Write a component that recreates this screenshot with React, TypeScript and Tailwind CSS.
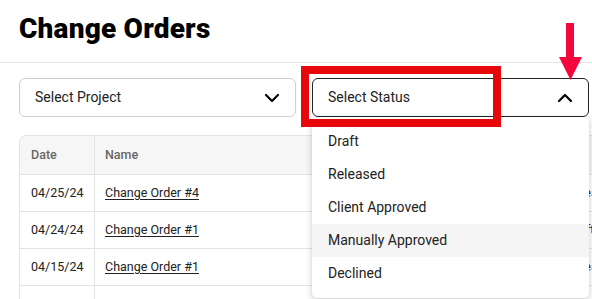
import { ChevronDown, ChevronUp } from "lucide-react";

const ROWS = [
  { date: "04/25/24", name: "Change Order #4", status: "Release" },
  { date: "04/24/24", name: "Change Order #1", status: "Draft" },
  { date: "04/15/24", name: "Change Order #1", status: "Release" },
  { date: "", name: "", status: "" },
];

const STATUSES = ["Draft", "Released", "Client Approved", "Manually Approved", "Declined"];

export default function App() {
  return (
    <div
      className="relative w-[592px] h-[299px] overflow-hidden bg-white text-[#222]"
      style={{ fontFamily: "Roboto, 'Noto Sans', sans-serif" }}
    >
      {/* Title */}
      <div className="px-[19px] pt-[13px] pb-[17px]">
        <h1 className="text-[28px] leading-[32px] font-black text-black tracking-[0.2px]">Change Orders</h1>
      </div>
      <div className="border-t border-[#e6e6e6]" />

      {/* Filters */}
      <div className="relative flex gap-4 pl-[19px] pt-[15px] w-[605px]">
        <div className="flex-none w-[277px] h-[39px] flex items-center justify-between pl-[15px] pr-[11px] border border-[#cfcfcf] rounded-[6px] text-[14px]">
          <span>Select Project</span>
          <ChevronDown size={24} strokeWidth={2.2} className="text-black" />
        </div>
        <div className="relative flex-none w-[277px] h-[39px] flex items-center justify-between pl-[15px] pr-[11px] border border-[#222] rounded-[6px] text-[14px]">
          <span>Select Status</span>
          <ChevronUp size={24} strokeWidth={2.2} className="text-black" />

          {/* Dropdown menu */}
          <div className="absolute left-[-1px] top-[38px] w-[277px] bg-white rounded-b-[5px] py-2 shadow-[0_2px_6px_rgba(0,0,0,0.22)] z-10">
            {STATUSES.map((s) => (
              <div
                key={s}
                className={`h-[33px] flex items-center pl-4 text-[14px] text-[#222] ${
                  s === "Manually Approved" ? "bg-[#f5f5f5]" : ""
                }`}
              >
                {s}
              </div>
            ))}
          </div>
        </div>
      </div>

      {/* Table */}
      <div className="pl-[19px] pt-[18px]">
        <div className="w-[640px] border-l border-t border-[#e3e3e3] rounded-tl-[7px] overflow-hidden">
          <div className="flex h-[39px] bg-[#f6f6f6] border-b border-[#e3e3e3] text-[12.5px] font-medium text-[#666]">
            <div className="w-[75px] flex items-center pl-[11px] border-r border-[#e3e3e3]">Date</div>
            <div className="w-[472px] flex items-center pl-[10px]">Name</div>
            <div className="flex-1 flex items-center"></div>
          </div>
          {ROWS.map((r, i) => (
            <div key={i} className="flex h-[37px] border-b border-[#e3e3e3] text-[12.5px] text-[#222]">
              <div className="w-[75px] flex items-center pl-[11px] border-r border-[#e3e3e3]">{r.date}</div>
              <div className="w-[472px] flex items-center pl-[10px]">
                <span className="underline underline-offset-2">{r.name}</span>
              </div>
              <div className="flex-1 flex items-center">{r.status}</div>
            </div>
          ))}
        </div>
      </div>

      {/* Annotation: red box */}
      <div className="absolute left-[301px] top-[66px] w-[200px] h-[61px] border-[8px] border-[#e8070b] z-20 pointer-events-none" />

      {/* Annotation: arrow */}
      <svg className="absolute left-[556px] top-[20px] z-20" width="30" height="64" viewBox="0 0 30 64">
        <rect x="10" y="3" width="8" height="35" fill="#f5073d" />
        <polygon points="3,37 26,37 14.5,60" fill="#f5073d" />
      </svg>
    </div>
  );
}
